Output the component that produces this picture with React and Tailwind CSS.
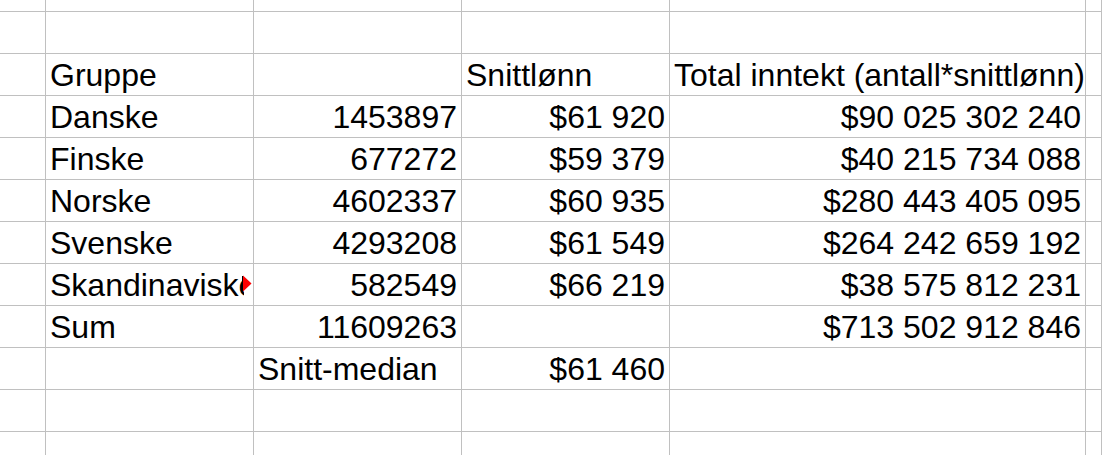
import React from "react";

const rows = [
  ["", "", "", "", ""],
  ["Gruppe", "", "Snittlønn", "Total inntekt (antall*snittlønn)", ""],
  ["Danske", "1453897", "$61 920", "$90 025 302 240", ""],
  ["Finske", "677272", "$59 379", "$40 215 734 088", ""],
  ["Norske", "4602337", "$60 935", "$280 443 405 095", ""],
  ["Svenske", "4293208", "$61 549", "$264 242 659 192", ""],
  ["Skandinaviske", "582549", "$66 219", "$38 575 812 231", ""],
  ["Sum", "11609263", "", "$713 502 912 846", ""],
  ["", "Snitt-median", "$61 460", "", ""],
  ["", "", "", "", ""],
];

const rightCols = [false, true, true, true, false];

function isRight(r, c, text) {
  if (r === 1) return false;
  if (text === "Snitt-median") return false;
  if (c === 0) return false;
  return rightCols[c];
}

function Cell({ children, right, clipped }) {
  return (
    <div
      className={
        "relative h-[42px] border-b border-r border-[#c0c0c0] flex items-center px-1 whitespace-nowrap " +
        (right ? "justify-end" : "justify-start")
      }
    >
      {clipped ? (
        <>
          <div className="w-[194px] overflow-hidden">{children}</div>
          <svg
            className="absolute right-[1px] top-[11px] z-10"
            width="10"
            height="17"
            viewBox="0 0 10 17"
          >
            <polygon points="1,0.5 9.5,8.5 1,16.5" fill="#ff0000" />
            <line x1="0.5" y1="1" x2="0.5" y2="16" stroke="#000" strokeWidth="1" />
          </svg>
        </>
      ) : (
        <span className="relative z-10">{children}</span>
      )}
    </div>
  );
}

export default function App() {
  return (
    <div
      className="w-[1102px] h-[455px] overflow-hidden bg-white text-black text-[32px]"
      style={{ fontFamily: '"Liberation Sans", Arial, sans-serif' }}
    >
      <div className="grid grid-cols-[46px_208px_208px_208px_416px_1fr]">
        {[0, 1, 2, 3, 4, 5].map((c) => (
          <div key={"top" + c} className="h-[12px] border-b border-r border-[#c0c0c0]" />
        ))}
        {rows.map((row, r) => (
          <React.Fragment key={r}>
            <div className="h-[42px] border-b border-r border-[#c0c0c0]" />
            {row.map((text, c) => (
              <Cell
                key={c}
                right={isRight(r, c, text)}
                clipped={text === "Skandinaviske"}
              >
                {text}
              </Cell>
            ))}
          </React.Fragment>
        ))}
        {[0, 1, 2, 3, 4, 5].map((c) => (
          <div key={"bot" + c} className="h-[30px] border-r border-[#c0c0c0]" />
        ))}
      </div>
    </div>
  );
}
